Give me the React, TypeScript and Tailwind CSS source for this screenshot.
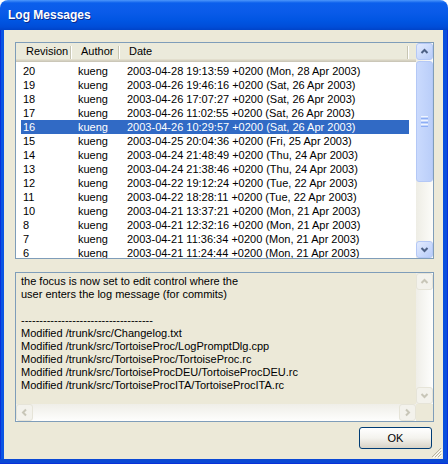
import React from "react";

const rows: [string, string][] = [
  ["20", "2003-04-28 19:13:59 +0200 (Mon, 28 Apr 2003)"],
  ["19", "2003-04-26 19:46:16 +0200 (Sat, 26 Apr 2003)"],
  ["18", "2003-04-26 17:07:27 +0200 (Sat, 26 Apr 2003)"],
  ["17", "2003-04-26 11:02:55 +0200 (Sat, 26 Apr 2003)"],
  ["16", "2003-04-26 10:29:57 +0200 (Sat, 26 Apr 2003)"],
  ["15", "2003-04-25 20:04:36 +0200 (Fri, 25 Apr 2003)"],
  ["14", "2003-04-24 21:48:49 +0200 (Thu, 24 Apr 2003)"],
  ["13", "2003-04-24 21:38:46 +0200 (Thu, 24 Apr 2003)"],
  ["12", "2003-04-22 19:12:24 +0200 (Tue, 22 Apr 2003)"],
  ["11", "2003-04-22 18:28:11 +0200 (Tue, 22 Apr 2003)"],
  ["10", "2003-04-21 13:37:21 +0200 (Mon, 21 Apr 2003)"],
  ["8", "2003-04-21 12:32:16 +0200 (Mon, 21 Apr 2003)"],
  ["7", "2003-04-21 11:36:34 +0200 (Mon, 21 Apr 2003)"],
  ["6", "2003-04-21 11:24:44 +0200 (Mon, 21 Apr 2003)"],
];

const message = [
  "the focus is now set to edit control where the",
  "user enters the log message (for commits)",
  "",
  "-".repeat(36),
  "Modified /trunk/src/Changelog.txt",
  "Modified /trunk/src/TortoiseProc/LogPromptDlg.cpp",
  "Modified /trunk/src/TortoiseProc/TortoiseProc.rc",
  "Modified /trunk/src/TortoiseProcDEU/TortoiseProcDEU.rc",
  "Modified /trunk/src/TortoiseProcITA/TortoiseProcITA.rc",
];

type Dir = "up" | "down" | "left" | "right";

const arrowPaths: Record<Dir, string> = {
  up: "M1.5 6 L4.5 3 L7.5 6",
  down: "M1.5 3 L4.5 6 L7.5 3",
  left: "M6 1.5 L3 4.5 L6 7.5",
  right: "M3 1.5 L6 4.5 L3 7.5",
};

function ScrollButton({ dir, disabled }: { dir: Dir; disabled?: boolean }) {
  return (
    <div
      className={
        "flex h-[17px] w-[17px] shrink-0 items-center justify-center rounded-[3px] border " +
        (disabled
          ? "border-[#E6E4D8] bg-[#F3F2EC]"
          : "border-[#B4C8F6] bg-linear-to-br from-[#E3EBFE] to-[#B7CCF9]")
      }
    >
      <svg width="9" height="9" viewBox="0 0 9 9">
        <path
          d={arrowPaths[dir]}
          fill="none"
          stroke={disabled ? "#C8C6B8" : "#4D6185"}
          strokeWidth="2"
        />
      </svg>
    </div>
  );
}

function HeaderCell({
  width,
  pad,
  children,
}: {
  width: string;
  pad: string;
  children: React.ReactNode;
}) {
  return (
    <div className={"relative flex h-full items-center pb-[2px] " + width + " " + pad}>
      {children}
      <div className="absolute top-[3px] right-0 flex h-[13px]">
        <div className="w-[1px] bg-[#C7C5B2]" />
        <div className="w-[1px] bg-white" />
      </div>
    </div>
  );
}

function ListView() {
  return (
    <div className="flex h-[217px] w-[419px] border border-[#7F9DB9] bg-white">
      <div className="flex min-w-0 flex-1 flex-col overflow-hidden">
        <div className="flex h-[19px] shrink-0 items-center bg-[#EBEADB] shadow-[inset_0_-1px_#CBC7B8,inset_0_-2px_#D6D2C2,inset_0_-3px_#E2DECD]">
          <HeaderCell width="w-[56px]" pad="pl-[10px]">Revision</HeaderCell>
          <HeaderCell width="w-[48px]" pad="pl-[9px]">Author</HeaderCell>
          <HeaderCell width="w-[289px]" pad="pl-[9px]">Date</HeaderCell>
        </div>
        <div className="pt-[2px]">
          {rows.map(([rev, date]) => {
            const sel = rev === "16";
            return (
              <div
                key={rev}
                className={
                  "ml-[5px] flex h-[14px] w-[388px] items-center leading-[14px] whitespace-nowrap " +
                  (sel ? "bg-[#316AC5] text-white" : "text-black")
                }
              >
                <div className="w-[51px] pl-[2px]">{rev}</div>
                <div className="w-[48px] pl-[6px]">kueng</div>
                <div className="pl-[7px]">{date}</div>
              </div>
            );
          })}
        </div>
      </div>
      <div className="flex w-[17px] shrink-0 flex-col bg-linear-to-r from-[#EEEDE5] to-[#FCFCF9]">
        <ScrollButton dir="up" />
        <div className="mt-[1px] flex h-[121px] flex-col items-center justify-center gap-[1px] rounded-[3px] border border-[#B4C8F6] bg-linear-to-r from-[#CADAFD] to-[#BACEF9]">
          <div className="h-[1px] w-[7px] bg-[#EEF4FE]" />
          <div className="h-[1px] w-[7px] bg-[#8DAEF5]" />
          <div className="h-[1px] w-[7px] bg-[#EEF4FE]" />
          <div className="h-[1px] w-[7px] bg-[#8DAEF5]" />
          <div className="h-[1px] w-[7px] bg-[#EEF4FE]" />
          <div className="h-[1px] w-[7px] bg-[#8DAEF5]" />
        </div>
        <div className="flex-1" />
        <ScrollButton dir="down" />
      </div>
    </div>
  );
}

function MessageBox() {
  return (
    <div className="mt-[13px] grid h-[150px] w-[419px] grid-cols-[1fr_17px] grid-rows-[1fr_17px] border border-[#7F9DB9] bg-[#ECE9D8]">
      <div className="overflow-hidden pt-[2px] pl-[5px] leading-[13px] whitespace-pre text-black">
        {message.map((line, i) => (
          <div key={i} className="h-[13px]">
            {line}
          </div>
        ))}
      </div>
      <div className="flex flex-col bg-linear-to-r from-[#EFEEE8] to-[#FEFEFD]">
        <ScrollButton dir="up" disabled />
        <div className="flex-1" />
        <ScrollButton dir="down" disabled />
      </div>
      <div className="flex bg-linear-to-b from-[#EFEEE8] to-[#FEFEFD]">
        <ScrollButton dir="left" disabled />
        <div className="flex-1" />
        <ScrollButton dir="right" disabled />
      </div>
      <div className="bg-[#ECE9D8]" />
    </div>
  );
}

export default function App() {
  return (
    <div className="flex h-[464px] w-[448px] flex-col font-['Liberation_Sans',Arial,sans-serif] text-[11px]">
      <div className="flex h-[30px] shrink-0 items-center rounded-t-[8px] bg-[linear-gradient(180deg,#4C97FB_0%,#0B5FEC_10%,#0A5BE9_40%,#0055E2_70%,#004DD8_90%,#0043C8_100%)] pl-[8px]">
        <span className="text-[12px] font-bold text-white [text-shadow:1px_1px_#0A2A8E]">
          Log Messages
        </span>
      </div>
      <div className="flex min-h-0 flex-1">
        <div className="w-[4px] shrink-0 border-l border-[#0831D9] bg-[#0A54E4]" />
        <div className="relative flex flex-1 flex-col bg-[#ECE9D8] pt-[12px] pl-[11px]">
          <ListView />
          <MessageBox />
          <div className="mt-[5px] flex w-[419px] justify-end pr-[2px]">
            <button className="flex h-[22px] w-[73px] items-center justify-center rounded-[3px] border border-[#003C74] bg-linear-to-b from-white via-[#F4F3EE] to-[#D8D3C7] text-black">
              OK
            </button>
          </div>
          <svg
            className="absolute right-[1px] bottom-[1px]"
            width="12"
            height="12"
            viewBox="0 0 12 12"
          >
            <path d="M11 2 L2 11 M11 5 L5 11 M11 8 L8 11" stroke="#B8B4A2" strokeWidth="1" />
            <path d="M12 3 L3 12 M12 6 L6 12 M12 9 L9 12" stroke="#FFFFFF" strokeWidth="1" />
          </svg>
        </div>
        <div className="w-[5px] shrink-0 border-r border-[#0831D9] bg-[#0A4EDC]" />
      </div>
      <div className="h-[5px] shrink-0 border-b border-[#0831D9] bg-[#0A48D4]" />
    </div>
  );
}
